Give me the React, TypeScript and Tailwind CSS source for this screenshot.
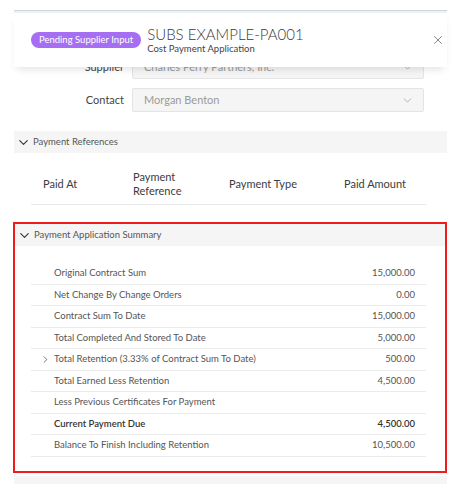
import { ChevronDown, ChevronRight, X } from 'lucide-react';

const summary = [
  { label: 'Original Contract Sum', value: '15,000.00' },
  { label: 'Net Change By Change Orders', value: '0.00' },
  { label: 'Contract Sum To Date', value: '15,000.00' },
  { label: 'Total Completed And Stored To Date', value: '5,000.00' },
  { label: 'Total Retention (3.33% of Contract Sum To Date)', value: '500.00', expandable: true },
  { label: 'Total Earned Less Retention', value: '4,500.00' },
  { label: 'Less Previous Certificates For Payment', value: '' },
  { label: 'Current Payment Due', value: '4,500.00', bold: true },
  { label: 'Balance To Finish Including Retention', value: '10,500.00' },
];

function SectionHeader({ title }: { title: string }) {
  return (
    <div className="flex h-[22px] items-center gap-[2px] bg-[#f5f5f5] pl-[2px] text-[9.5px] text-[#555]">
      <ChevronDown size={15} strokeWidth={1.8} className="text-[#333]" />
      <span>{title}</span>
    </div>
  );
}

function SelectField({ label, value }: { label: string; value: string }) {
  return (
    <div className="flex items-center">
      <div className="w-[110px] text-right text-[11px] text-[#444]">{label}</div>
      <div className="ml-[8px] flex h-[24px] w-[292px] items-center justify-between rounded-[2px] border border-[#e4e4e4] bg-[#f5f5f5] pl-[11px] pr-[9px]">
        <span className="text-[11px] text-[#9a9a9a]">{value}</span>
        <ChevronDown size={13} strokeWidth={1.3} className="text-[#999]" />
      </div>
    </div>
  );
}

export default function App() {
  return (
    <div className="min-h-[490px] w-[462px] bg-white font-['Lato',sans-serif]">
      <div className="mx-[14px] w-[433px] pt-[10px]">
        {/* top edge of the panel behind */}
        <div className="h-[1px] bg-[#cfd5dc]" />
        <div className="h-[2px] bg-[#eef0f3]" />

        {/* ═══ Header ═══ */}
        <div className="relative z-10 flex h-[54px] items-center bg-white pl-[17px] pr-[2px] shadow-[0_5px_8px_-3px_rgba(0,0,0,0.12)]">
          <span className="flex h-[16px] items-center rounded-full bg-[#a66ef2] px-[8px] text-[9.5px] text-white">
            Pending Supplier Input
          </span>
          <div className="ml-[6px] flex flex-col">
            <span className="text-[15px] font-light leading-[18px] text-[#3a3a3a]">
              SUBS EXAMPLE-PA001
            </span>
            <span className="text-[9.5px] leading-[12px] text-[#444]">Cost Payment Application</span>
          </div>
          <X size={14} strokeWidth={1.2} className="ml-auto text-[#555]" />
        </div>

        {/* ═══ Supplier / Contact ═══ */}
        <div className="relative z-0 -mt-[12px] flex flex-col gap-[9px]">
          <SelectField label="Supplier" value="Charles Perry Partners, Inc." />
          <SelectField label="Contact" value="Morgan Benton" />
        </div>

        {/* ═══ Payment References ═══ */}
        <div className="mt-[19px]">
          <SectionHeader title="Payment References" />
          <div className="ml-[17px] mr-[21px] mt-[17px] grid grid-cols-[102px_96px_115px_82px] items-center border-b border-[#e8e8e8] pb-[6px] text-[11px] leading-[14px] text-[#3c3c3c]">
            <span className="pl-[12px]">Paid At</span>
            <span>
              Payment
              <br />
              Reference
            </span>
            <span>Payment Type</span>
            <span>Paid Amount</span>
          </div>
        </div>

        {/* ═══ Payment Application Summary ═══ */}
        <div className="-ml-[1px] mt-[17px] border-2 border-[#f01c1c] pb-[14px]">
          <SectionHeader title="Payment Application Summary" />
          <div className="ml-[16px] mr-[19px] mt-[17px]">
            {summary.map((row) => (
              <div
                key={row.label}
                className={`flex h-[21.5px] items-center border-b border-[#ebebeb] pr-[11px] text-[9.5px] ${
                  row.bold ? 'font-semibold text-[#333]' : 'text-[#555]'
                }`}
              >
                <div className="flex w-[23px] justify-end pr-[3px]">
                  {row.expandable && <ChevronRight size={11} strokeWidth={1.6} className="text-[#444]" />}
                </div>
                <span>{row.label}</span>
                <span className="ml-auto">{row.value}</span>
              </div>
            ))}
          </div>
        </div>

        {/* next section peeking in */}
        <div className="mt-[3px] h-[8px] bg-[#f5f5f5]" />
      </div>
    </div>
  );
}
